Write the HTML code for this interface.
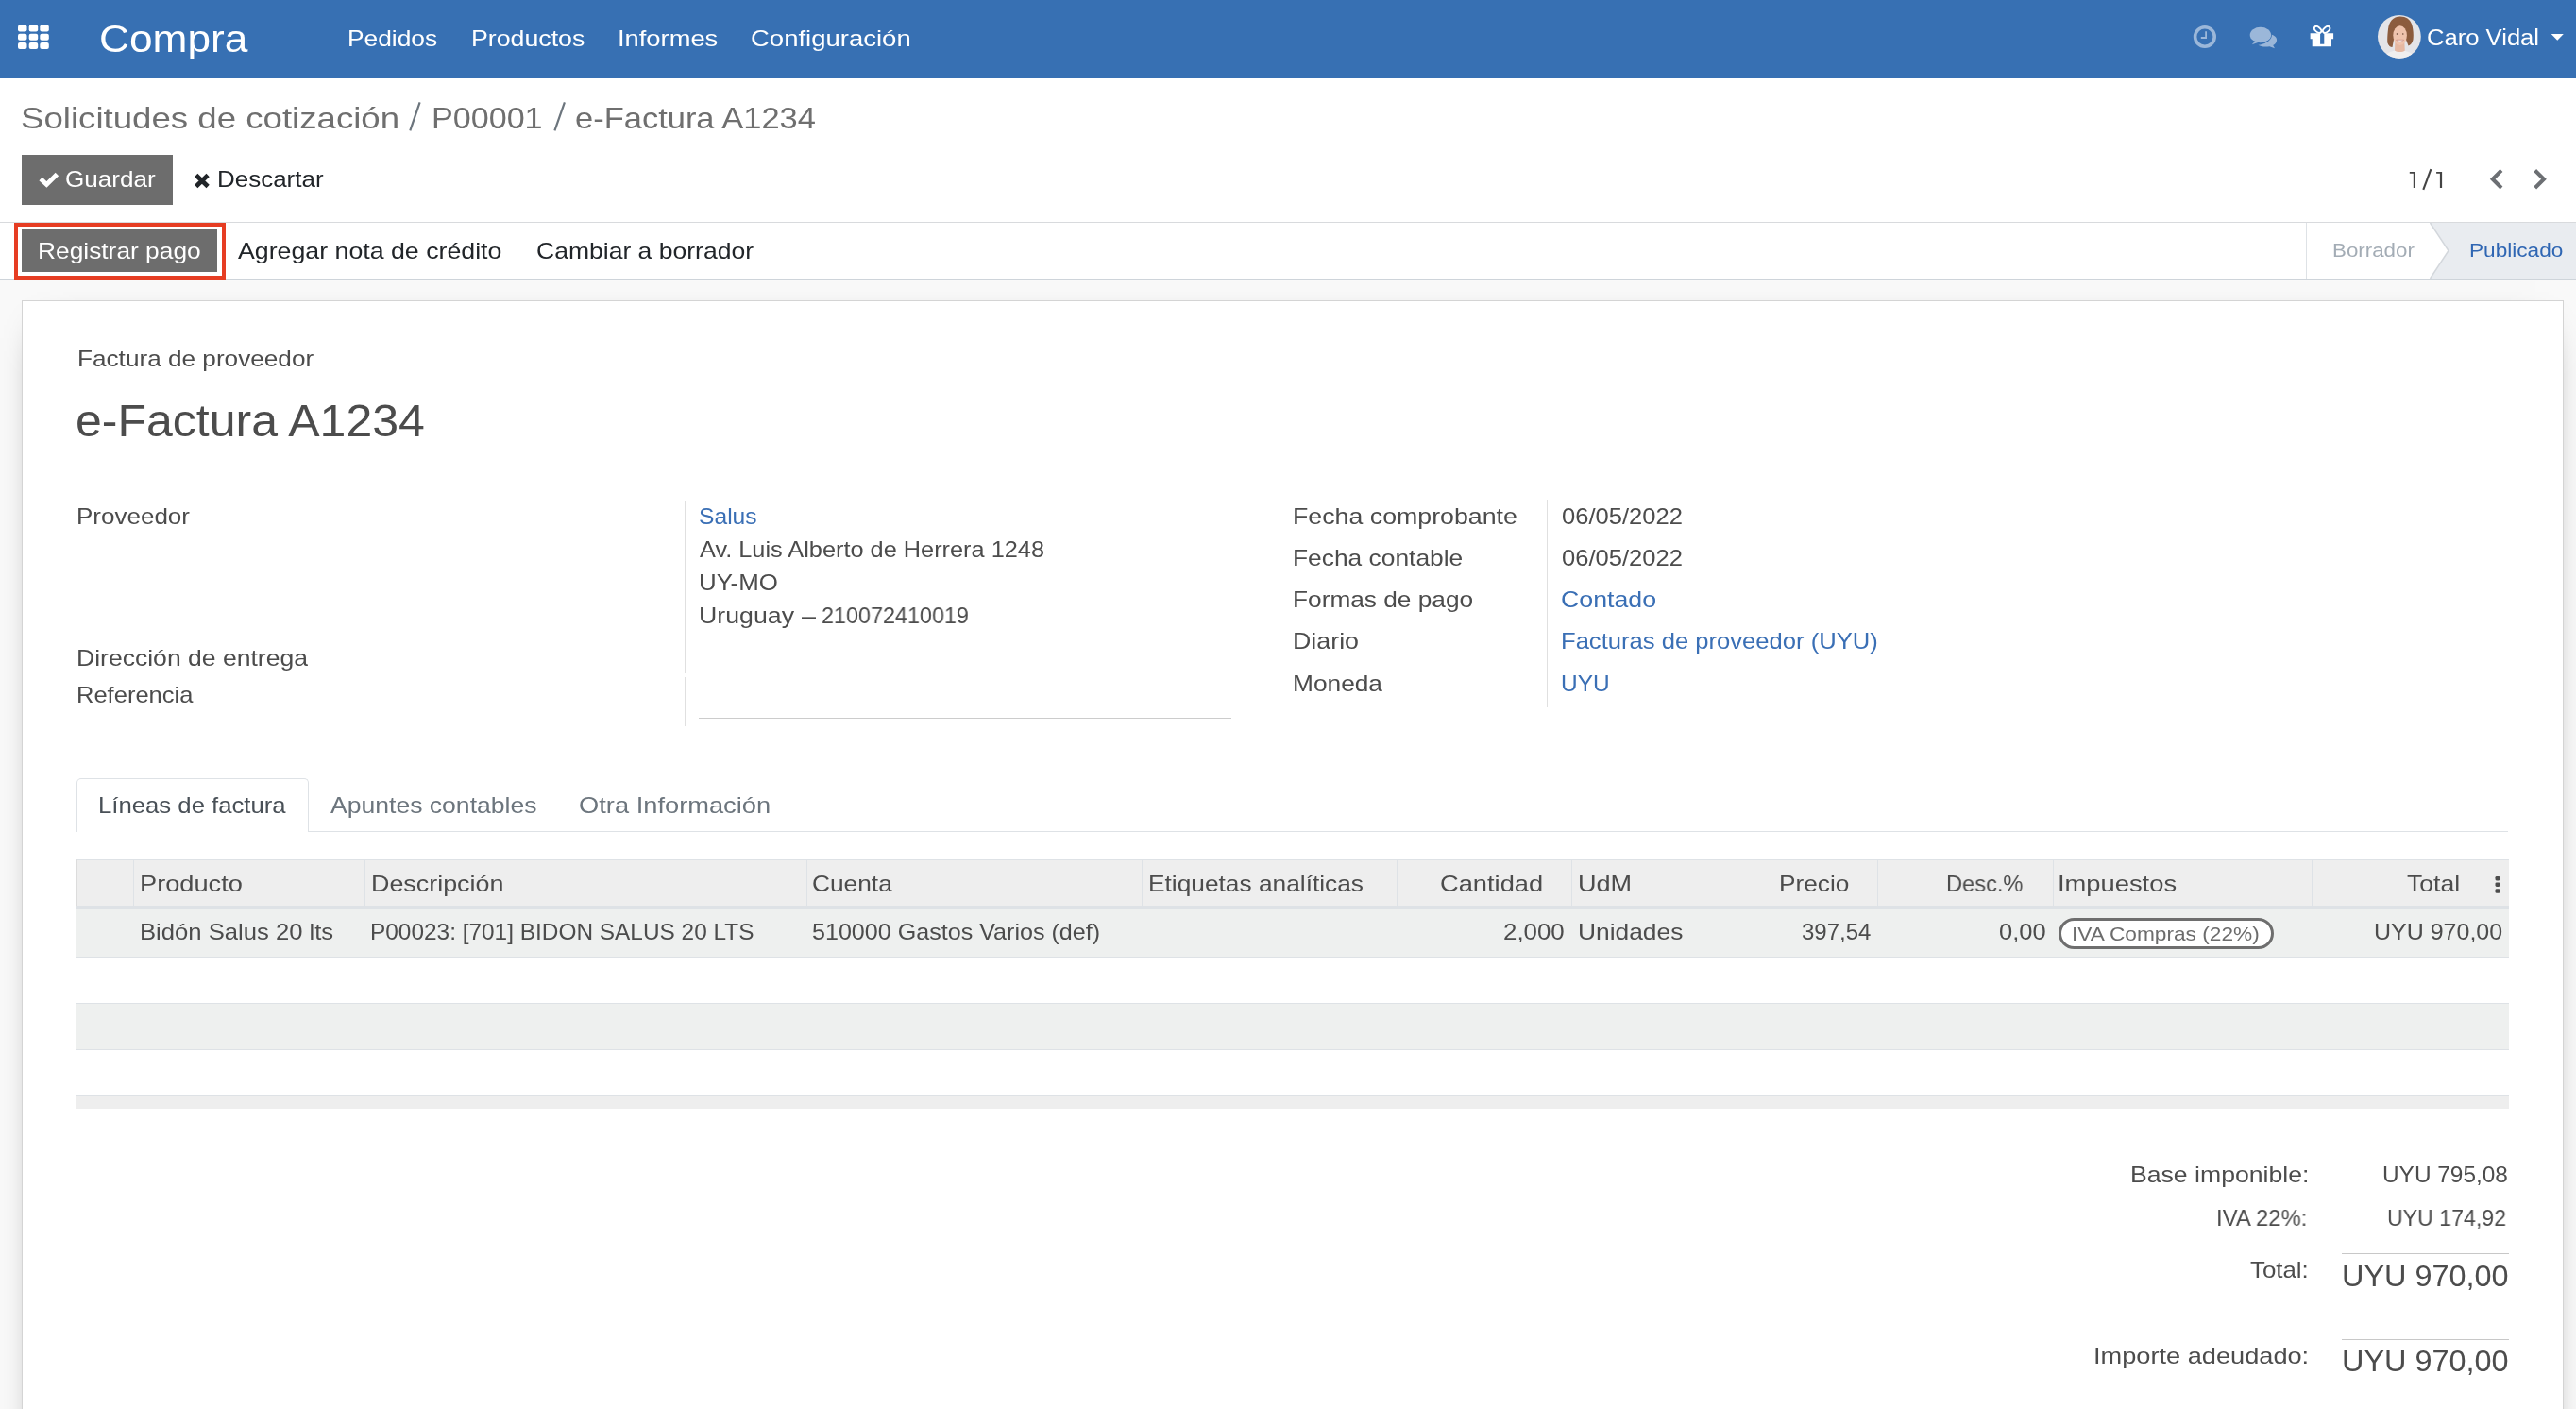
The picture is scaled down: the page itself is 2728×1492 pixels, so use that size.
<!DOCTYPE html>
<html><head><meta charset="utf-8"><style>
html,body{margin:0;padding:0;}
body{width:2728px;height:1492px;overflow:hidden;position:relative;background:#fff;font-family:"Liberation Sans", sans-serif;}
.t{position:absolute;white-space:pre;transform-origin:0 0;will-change:transform;font-family:"Liberation Sans", sans-serif;}
.b{position:absolute;box-sizing:border-box;}

</style></head><body>
<!-- navbar -->
<div class="b" style="left:0;top:0;width:2728px;height:83px;background:#3770b3"></div>
<!-- grid icon -->
<svg class="b" style="left:0;top:0" width="70" height="83" viewBox="0 0 70 83">
<g fill="#fff">
<rect x="19" y="26.4" width="9.5" height="7" rx="2"/><rect x="30.7" y="26.4" width="9.5" height="7" rx="2"/><rect x="42.3" y="26.4" width="9.5" height="7" rx="2"/>
<rect x="19" y="35.7" width="9.5" height="7" rx="2"/><rect x="30.7" y="35.7" width="9.5" height="7" rx="2"/><rect x="42.3" y="35.7" width="9.5" height="7" rx="2"/>
<rect x="19" y="45" width="9.5" height="7" rx="2"/><rect x="30.7" y="45" width="9.5" height="7" rx="2"/><rect x="42.3" y="45" width="9.5" height="7" rx="2"/>
</g></svg>
<!-- control panel separators -->
<div class="b" style="left:0;top:235px;width:2728px;height:1px;background:#d8dadd"></div>
<div class="b" style="left:0;top:295px;width:2728px;height:1px;background:#ced4da"></div>
<!-- gray background -->
<div class="b" style="left:0;top:296px;width:2728px;height:1196px;background:#f9f9f9"></div>
<!-- sheet -->
<div class="b" style="left:23px;top:318px;width:2692px;height:1300px;background:#fff;border:1px solid #d4d4d4;box-shadow:0 10px 40px -30px #000"></div>
<!-- Guardar button -->
<div class="b" style="left:23px;top:164px;width:160px;height:53px;background:#6d6d6d"></div>
<!-- Registrar pago -->
<div class="b" style="left:15px;top:236px;width:224px;height:60px;border:4px solid #e63d23"></div>
<div class="b" style="left:23px;top:243px;width:207px;height:45px;background:#6d6d6d"></div>
<!-- statusbar -->
<div class="b" style="left:2442px;top:236px;width:1px;height:59px;background:#dee2e6"></div>
<svg class="b" style="left:2560px;top:236px" width="168" height="59" viewBox="0 0 168 59">
<polygon points="13.5,0 168,0 168,59 13.5,59 33,29.5" fill="#e9ecf0"/>
<polyline points="13.5,0 33,29.5 13.5,59" fill="none" stroke="#d3d7dc" stroke-width="1.5"/>
</svg>
<!-- tabs -->
<div class="b" style="left:81px;top:880px;width:2575px;height:1px;background:#dee2e6"></div>
<div class="b" style="left:81px;top:824px;width:246px;height:57px;background:#fff;border:1px solid #dee2e6;border-bottom:none;border-radius:5px 5px 0 0"></div>
<!-- table -->
<div class="b" style="left:81px;top:910px;width:2576px;height:50px;background:#eeeeee;border-top:1px solid #dee2e6;border-left:1px solid #dcdcdc"></div>
<div class="b" style="left:81px;top:959px;width:2576px;height:4px;background:#dee2e6"></div>
<div class="b" style="left:81px;top:963px;width:2576px;height:51px;background:#eef0ef;border-bottom:1px solid #dee2e6"></div>
<div class="b" style="left:81px;top:1062px;width:2576px;height:50px;background:#eef0ef;border-top:1px solid #dee2e6;border-bottom:1px solid #dee2e6"></div>
<div class="b" style="left:81px;top:1160px;width:2576px;height:14px;background:#eeeeee;border-top:1px solid #dee2e6"></div>
<!-- column borders -->
<div class="b" style="left:141px;top:911px;width:1px;height:48px;background:#dee2e6"></div>
<div class="b" style="left:386px;top:911px;width:1px;height:48px;background:#dee2e6"></div>
<div class="b" style="left:854px;top:911px;width:1px;height:48px;background:#dee2e6"></div>
<div class="b" style="left:1209px;top:911px;width:1px;height:48px;background:#dee2e6"></div>
<div class="b" style="left:1479px;top:911px;width:1px;height:48px;background:#dee2e6"></div>
<div class="b" style="left:1664px;top:911px;width:1px;height:48px;background:#dee2e6"></div>
<div class="b" style="left:1803px;top:911px;width:1px;height:48px;background:#dee2e6"></div>
<div class="b" style="left:1988px;top:911px;width:1px;height:48px;background:#dee2e6"></div>
<div class="b" style="left:2174px;top:911px;width:1px;height:48px;background:#dee2e6"></div>
<div class="b" style="left:2448px;top:911px;width:1px;height:48px;background:#dee2e6"></div>
<!-- badge -->
<div class="b" style="left:2180px;top:972px;width:228px;height:33px;background:#fff;border:3px solid #6e6e6e;border-radius:17px"></div>
<!-- field separators -->
<div class="b" style="left:725px;top:530px;width:1px;height:183px;background:#e0e0e0"></div>
<div class="b" style="left:725px;top:717px;width:1px;height:52px;background:#e0e0e0"></div>
<div class="b" style="left:740px;top:760px;width:564px;height:1px;background:#cccccc"></div>
<div class="b" style="left:1638px;top:529px;width:1px;height:220px;background:#e0e0e0"></div>
<!-- totals lines -->
<div class="b" style="left:2480px;top:1327px;width:177px;height:1px;background:#c8c8c8"></div>
<div class="b" style="left:2480px;top:1418px;width:177px;height:1px;background:#c8c8c8"></div>
<!-- navbar icons -->
<svg class="b" style="left:2300px;top:0" width="428" height="83" viewBox="2300 0 428 83">
<!-- clock -->
<g fill="none" stroke="#9bb7d9">
<circle cx="2334.9" cy="39" r="10.3" stroke-width="3.6"/>
</g>
<path d="M2335.2 33.2 h1.8 v7.7 h-6.2 v-1.8 h4.4z" fill="#9bb7d9"/>
<!-- chat -->
<path d="M2399 35.5 C2406 35.5 2411.1 38.5 2411.1 42.2 C2411.1 44.8 2409.5 46.8 2407.2 48 L2409 51.2 L2403.5 49.2 C2402 49.5 2400.5 49.5 2399 49.5 C2396 49.5 2393.5 48.8 2391.5 47.7 C2397 47.2 2404.8 44 2404.8 37.2 C2404.8 36.6 2404.7 36 2404.5 35.5 Z" fill="#9bb7d9"/>
<ellipse cx="2393.9" cy="37" rx="11.2" ry="8.3" fill="#9bb7d9" stroke="#3770b3" stroke-width="1.6"/>
<ellipse cx="2393.9" cy="37" rx="11.2" ry="8.3" fill="#9bb7d9"/>
<path d="M2388 43.5 L2384.8 47.2 L2392 44.8 Z" fill="#9bb7d9"/>
<!-- gift -->
<path d="M2446.6 35.3 H2471.1 V41.2 H2469 V49.2 H2448.7 V41.2 H2446.6 Z M2457.1 35.3 V46.8 H2461.3 V35.3 Z" fill="#fff" fill-rule="evenodd"/>
<g fill="none" stroke="#fff" stroke-width="1.9">
<ellipse cx="2454.6" cy="31.4" rx="4.3" ry="2.6" transform="rotate(40 2454.6 31.4)"/>
<ellipse cx="2463.6" cy="31.4" rx="4.3" ry="2.6" transform="rotate(-40 2463.6 31.4)"/>
</g>
<!-- avatar -->
<defs><clipPath id="av"><circle cx="2540.9" cy="38.8" r="22.9"/></clipPath></defs>
<circle cx="2540.9" cy="38.8" r="22.9" fill="#e4e4e8"/>
<g clip-path="url(#av)">
<path d="M2524 63 C2526 56 2533 53.2 2541 53.2 C2549 53.2 2556 56 2558 63 Z" fill="#f0efef"/>
<path d="M2536.3 45 L2546.3 45 L2546.8 53.5 C2544.5 55.5 2538.5 55.5 2536 53.5 Z" fill="#e6b8a2"/>
<path d="M2542 17.6 C2534 17.6 2530 23 2529 31 C2528.3 37 2528 42 2528.4 45.5 C2529.5 48.5 2531.5 50 2533.5 50 L2535 42 L2548 42 L2550.5 48.5 C2552.5 48 2554.5 46 2555.5 42 C2556.2 36 2555.5 30 2554 25.5 C2552 20.5 2548 17.6 2542 17.6 Z" fill="#8c5c3e"/>
<ellipse cx="2541.6" cy="37.6" rx="7.3" ry="10.4" fill="#efc3ad"/>
<path d="M2533.6 34 C2534 26 2538 22.3 2543.5 22.5 C2548.5 22.8 2550.5 27 2550.3 33 C2548.5 29 2546 27 2542.5 26.6 C2538.5 26.3 2535.5 29 2533.6 34 Z" fill="#8c5c3e"/>
<path d="M2537.6 42.2 C2539.5 44.8 2543.7 44.8 2545.6 42.2 Z" fill="#fbf5f2" stroke="#c7877c" stroke-width="0.7"/>
<circle cx="2538.4" cy="36" r="0.7" fill="#5a3a2c"/><circle cx="2544.8" cy="36" r="0.7" fill="#5a3a2c"/>
</g>
<!-- caret -->
<path d="M2701.7 36.1 H2714.8 L2708.25 42.8 Z" fill="#fff"/>
</svg>
<!-- check icon -->
<svg class="b" style="left:38px;top:180px" width="28" height="24" viewBox="38 180 28 24">
<path d="M43.1 189.4 L49.4 195.4 L60.4 184.6" fill="none" stroke="#fff" stroke-width="4.9" stroke-linecap="butt" stroke-linejoin="miter"/>
</svg>
<!-- times icon -->
<svg class="b" style="left:202px;top:180px" width="24" height="24" viewBox="202 180 24 24">
<path d="M207.7 185.5 L220.1 197.5 M220.1 185.5 L207.7 197.5" fill="none" stroke="#212529" stroke-width="4.7" stroke-linecap="butt"/>
</svg>
<!-- chevrons -->
<svg class="b" style="left:2630px;top:175px" width="75" height="30" viewBox="2630 175 75 30">
<path d="M2647.6 181.9 L2639.7 189.75 L2647.6 197.6" fill="none" stroke="#6c6f73" stroke-width="4.0" stroke-linecap="square" stroke-linejoin="miter"/>
<path d="M2686.1 181.9 L2694.0 189.75 L2686.1 197.6" fill="none" stroke="#6c6f73" stroke-width="4.0" stroke-linecap="square" stroke-linejoin="miter"/>
</svg>
<!-- kebab -->
<svg class="b" style="left:2638px;top:924px" width="14" height="26" viewBox="2638 924 14 26">
<g fill="#4c4c4c"><rect x="2642.5" y="927.9" width="4.9" height="4.5" rx="1.4"/><rect x="2642.5" y="934.4" width="4.9" height="4.5" rx="1.4"/><rect x="2642.5" y="941.2" width="4.9" height="4.6" rx="1.4"/></g>
</svg>
<!-- pager 1/1 -->
<svg class="b" style="left:2545px;top:175px" width="50" height="30" viewBox="2545 175 50 30">
<g fill="#444"><path d="M2551.8 182.1 H2558 V199 H2555.8 V183.8 H2551.8 Z"/><path d="M2580.1 182.1 H2586.1 V199 H2583.9 V183.8 H2580.1 Z"/></g>
<path d="M2566.3 200.9 L2574.4 179.1" stroke="#444" stroke-width="2.1" fill="none"/>
</svg>
<!-- breadcrumb slashes -->
<svg class="b" style="left:420px;top:100px" width="200" height="45" viewBox="420 100 200 45">
<path d="M434.3 138.4 L444.6 108.4 M587.4 138.4 L597.9 108.4" stroke="#6c757d" stroke-width="2.2" fill="none"/>
</svg>

<span class="t" style="left:104.8px;top:21.1px;font-size:40px;line-height:40px;transform:scaleX(1.1062);color:#fff;">Compra</span>
<span class="t" style="left:367.9px;top:28.9px;font-size:24px;line-height:24px;transform:scaleX(1.0965);color:#fff;">Pedidos</span>
<span class="t" style="left:498.5px;top:28.9px;font-size:24px;line-height:24px;transform:scaleX(1.1134);color:#fff;">Productos</span>
<span class="t" style="left:653.7px;top:28.9px;font-size:24px;line-height:24px;transform:scaleX(1.1383);color:#fff;">Informes</span>
<span class="t" style="left:794.9px;top:28.9px;font-size:24px;line-height:24px;transform:scaleX(1.1459);color:#fff;">Configuración</span>
<span class="t" style="left:2569.7px;top:29.2px;font-size:23px;line-height:23px;transform:scaleX(1.1129);color:#fff;">Caro Vidal</span>
<span class="t" style="left:21.9px;top:108.9px;font-size:32px;line-height:32px;transform:scaleX(1.1446);color:#6f6f6f;">Solicitudes de cotización</span>
<span class="t" style="left:456.6px;top:108.9px;font-size:32px;line-height:32px;transform:scaleX(1.0657);color:#6f6f6f;">P00001</span>
<span class="t" style="left:608.9px;top:108.9px;font-size:32px;line-height:32px;transform:scaleX(1.0775);color:#6f6f6f;">e-Factura A1234</span>
<span class="t" style="left:69.1px;top:178.3px;font-size:24px;line-height:24px;transform:scaleX(1.0867);color:#fff;">Guardar</span>
<span class="t" style="left:230.4px;top:178.3px;font-size:24px;line-height:24px;transform:scaleX(1.0822);color:#212529;">Descartar</span>
<span class="t" style="left:40.2px;top:253.7px;font-size:24px;line-height:24px;transform:scaleX(1.0969);color:#fff;">Registrar pago</span>
<span class="t" style="left:252.0px;top:253.7px;font-size:24px;line-height:24px;transform:scaleX(1.1139);color:#212529;">Agregar nota de crédito</span>
<span class="t" style="left:568.4px;top:253.7px;font-size:24px;line-height:24px;transform:scaleX(1.1053);color:#212529;">Cambiar a borrador</span>
<span class="t" style="left:2470.2px;top:255.3px;font-size:20px;line-height:20px;transform:scaleX(1.1160);color:#a3acb5;">Borrador</span>
<span class="t" style="left:2615.3px;top:255.3px;font-size:20px;line-height:20px;transform:scaleX(1.1312);color:#2f66b3;">Publicado</span>
<span class="t" style="left:81.8px;top:368.0px;font-size:24px;line-height:24px;transform:scaleX(1.0903);color:#4c4c4c;">Factura de proveedor</span>
<span class="t" style="left:80.3px;top:420.7px;font-size:49px;line-height:49px;transform:scaleX(1.0209);color:#4c4c4c;">e-Factura A1234</span>
<span class="t" style="left:80.9px;top:535.2px;font-size:24px;line-height:24px;transform:scaleX(1.0835);color:#4c4c4c;">Proveedor</span>
<span class="t" style="left:740.0px;top:535.2px;font-size:24px;line-height:24px;transform:scaleX(1.0265);color:#3a6fb5;">Salus</span>
<span class="t" style="left:741.0px;top:570.4px;font-size:24px;line-height:24px;transform:scaleX(1.0549);color:#4c4c4c;">Av. Luis Alberto de Herrera 1248</span>
<span class="t" style="left:739.9px;top:604.7px;font-size:24px;line-height:24px;transform:scaleX(1.0772);color:#4c4c4c;">UY-MO</span>
<span class="t" style="left:740.3px;top:640.4px;font-size:24px;line-height:24px;transform:scaleX(1.1135);color:#4c4c4c;">Uruguay</span>
<span class="t" style="left:849.0px;top:640.4px;font-size:24px;line-height:24px;transform:scaleX(0.3042);color:#4c4c4c;">——</span>
<span class="t" style="left:869.8px;top:640.4px;font-size:24px;line-height:24px;transform:scaleX(0.9734);color:#4c4c4c;">210072410019</span>
<span class="t" style="left:80.9px;top:685.4px;font-size:24px;line-height:24px;transform:scaleX(1.1062);color:#4c4c4c;">Dirección de entrega</span>
<span class="t" style="left:80.9px;top:723.5px;font-size:24px;line-height:24px;transform:scaleX(1.0630);color:#4c4c4c;">Referencia</span>
<span class="t" style="left:1368.8px;top:534.5px;font-size:24px;line-height:24px;transform:scaleX(1.1145);color:#4c4c4c;">Fecha comprobante</span>
<span class="t" style="left:1368.8px;top:578.6px;font-size:24px;line-height:24px;transform:scaleX(1.0985);color:#4c4c4c;">Fecha contable</span>
<span class="t" style="left:1368.8px;top:622.9px;font-size:24px;line-height:24px;transform:scaleX(1.0939);color:#4c4c4c;">Formas de pago</span>
<span class="t" style="left:1368.8px;top:666.9px;font-size:24px;line-height:24px;transform:scaleX(1.1168);color:#4c4c4c;">Diario</span>
<span class="t" style="left:1368.8px;top:712.0px;font-size:24px;line-height:24px;transform:scaleX(1.0951);color:#4c4c4c;">Moneda</span>
<span class="t" style="left:1654.4px;top:534.5px;font-size:24px;line-height:24px;transform:scaleX(1.0654);color:#4c4c4c;">06/05/2022</span>
<span class="t" style="left:1654.4px;top:578.6px;font-size:24px;line-height:24px;transform:scaleX(1.0654);color:#4c4c4c;">06/05/2022</span>
<span class="t" style="left:1653.3px;top:622.9px;font-size:24px;line-height:24px;transform:scaleX(1.1131);color:#3a6fb5;">Contado</span>
<span class="t" style="left:1653.3px;top:666.9px;font-size:24px;line-height:24px;transform:scaleX(1.0665);color:#3a6fb5;">Facturas de proveedor (UYU)</span>
<span class="t" style="left:1653.4px;top:712.0px;font-size:24px;line-height:24px;transform:scaleX(1.0178);color:#3a6fb5;">UYU</span>
<span class="t" style="left:103.6px;top:840.7px;font-size:24px;line-height:24px;transform:scaleX(1.0712);color:#495057;">Líneas de factura</span>
<span class="t" style="left:349.5px;top:840.7px;font-size:24px;line-height:24px;transform:scaleX(1.1065);color:#6c757d;">Apuntes contables</span>
<span class="t" style="left:613.2px;top:840.7px;font-size:24px;line-height:24px;transform:scaleX(1.1367);color:#6c757d;">Otra Información</span>
<span class="t" style="left:147.9px;top:923.7px;font-size:24px;line-height:24px;transform:scaleX(1.1329);color:#4c4c4c;">Producto</span>
<span class="t" style="left:392.9px;top:923.7px;font-size:24px;line-height:24px;transform:scaleX(1.1200);color:#4c4c4c;">Descripción</span>
<span class="t" style="left:860.3px;top:923.7px;font-size:24px;line-height:24px;transform:scaleX(1.0955);color:#4c4c4c;">Cuenta</span>
<span class="t" style="left:1215.6px;top:923.7px;font-size:24px;line-height:24px;transform:scaleX(1.0955);color:#4c4c4c;">Etiquetas analíticas</span>
<span class="t" style="left:1524.9px;top:923.7px;font-size:24px;line-height:24px;transform:scaleX(1.1363);color:#4c4c4c;">Cantidad</span>
<span class="t" style="left:1671.4px;top:923.7px;font-size:24px;line-height:24px;transform:scaleX(1.1278);color:#4c4c4c;">UdM</span>
<span class="t" style="left:1883.6px;top:923.7px;font-size:24px;line-height:24px;transform:scaleX(1.0918);color:#4c4c4c;">Precio</span>
<span class="t" style="left:2061.4px;top:923.7px;font-size:24px;line-height:24px;transform:scaleX(0.9847);color:#4c4c4c;">Desc.%</span>
<span class="t" style="left:2179.2px;top:923.7px;font-size:24px;line-height:24px;transform:scaleX(1.1387);color:#4c4c4c;">Impuestos</span>
<span class="t" style="left:2549.3px;top:923.7px;font-size:24px;line-height:24px;transform:scaleX(1.1081);color:#4c4c4c;">Total</span>
<span class="t" style="left:147.6px;top:975.3px;font-size:24px;line-height:24px;transform:scaleX(1.0679);color:#4c4c4c;">Bidón Salus 20 lts</span>
<span class="t" style="left:392.2px;top:975.3px;font-size:24px;line-height:24px;transform:scaleX(1.0167);color:#4c4c4c;">P00023: [701] BIDON SALUS 20 LTS</span>
<span class="t" style="left:860.0px;top:975.3px;font-size:24px;line-height:24px;transform:scaleX(1.0457);color:#4c4c4c;">510000 Gastos Varios (def)</span>
<span class="t" style="left:1591.9px;top:975.3px;font-size:24px;line-height:24px;transform:scaleX(1.0782);color:#4c4c4c;">2,000</span>
<span class="t" style="left:1670.5px;top:975.3px;font-size:24px;line-height:24px;transform:scaleX(1.0976);color:#4c4c4c;">Unidades</span>
<span class="t" style="left:1908.4px;top:975.3px;font-size:24px;line-height:24px;transform:scaleX(0.9965);color:#4c4c4c;">397,54</span>
<span class="t" style="left:2117.0px;top:975.3px;font-size:24px;line-height:24px;transform:scaleX(1.0612);color:#4c4c4c;">0,00</span>
<span class="t" style="left:2193.9px;top:978.1px;font-size:21px;line-height:21px;transform:scaleX(1.0799);color:#6c6c6c;">IVA Compras (22%)</span>
<span class="t" style="left:2513.7px;top:975.3px;font-size:24px;line-height:24px;transform:scaleX(1.0410);color:#4c4c4c;">UYU 970,00</span>
<span class="t" style="left:2255.9px;top:1231.8px;font-size:24px;line-height:24px;transform:scaleX(1.1089);color:#4c4c4c;">Base imponible:</span>
<span class="t" style="left:2523.0px;top:1231.8px;font-size:24px;line-height:24px;transform:scaleX(1.0162);color:#4c4c4c;">UYU 795,08</span>
<span class="t" style="left:2347.0px;top:1278.2px;font-size:24px;line-height:24px;transform:scaleX(0.9936);color:#4c4c4c;">IVA 22%:</span>
<span class="t" style="left:2528.3px;top:1278.2px;font-size:24px;line-height:24px;transform:scaleX(0.9637);color:#4c4c4c;">UYU 174,92</span>
<span class="t" style="left:2383.0px;top:1332.9px;font-size:24px;line-height:24px;transform:scaleX(1.0773);color:#4c4c4c;">Total:</span>
<span class="t" style="left:2479.7px;top:1334.6px;font-size:32px;line-height:32px;transform:scaleX(1.0132);color:#4c4c4c;">UYU 970,00</span>
<span class="t" style="left:2216.7px;top:1424.4px;font-size:24px;line-height:24px;transform:scaleX(1.1324);color:#4c4c4c;">Importe adeudado:</span>
<span class="t" style="left:2479.7px;top:1425.4px;font-size:32px;line-height:32px;transform:scaleX(1.0132);color:#4c4c4c;">UYU 970,00</span>
</body></html>
